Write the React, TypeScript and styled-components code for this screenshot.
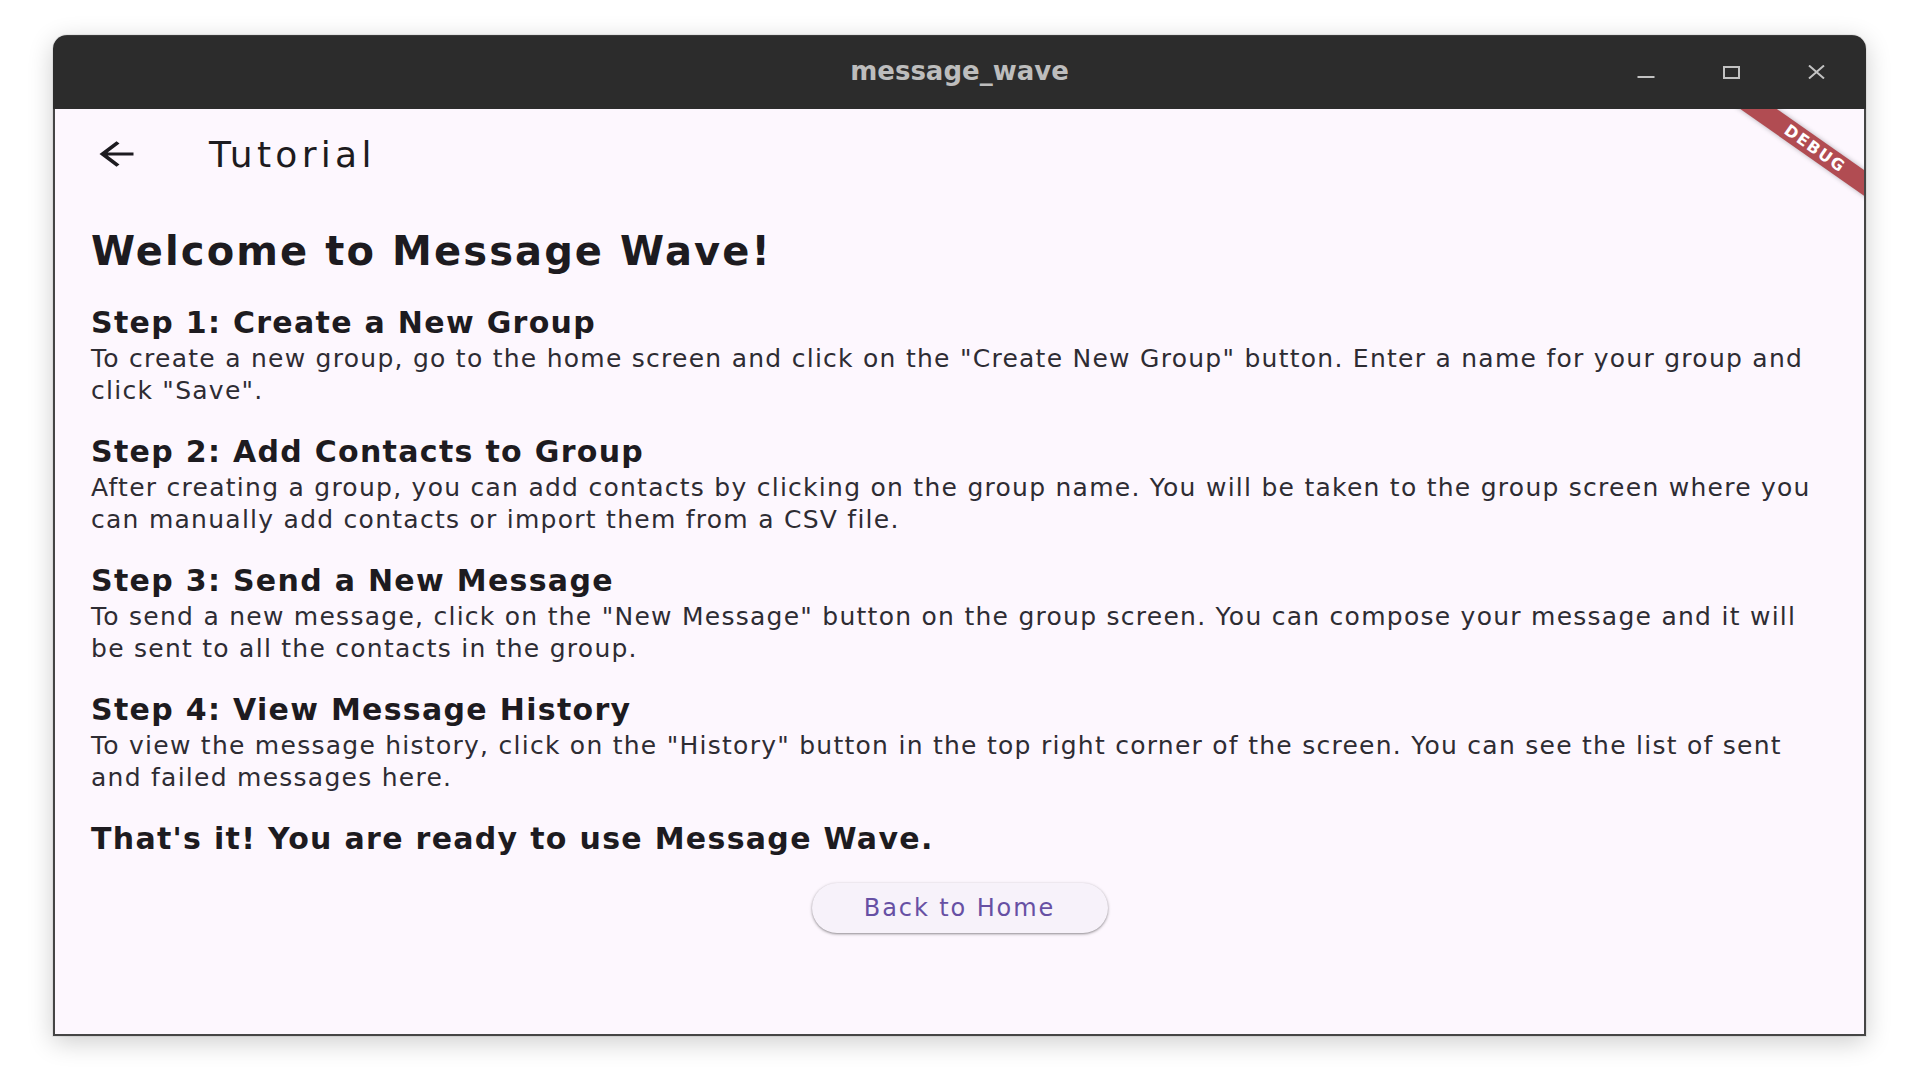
import React from "react";
import styled, { createGlobalStyle } from "styled-components";

const GlobalStyle = createGlobalStyle`
  html, body {
    margin: 0;
    padding: 0;
    background: #ffffff;
  }
  body {
    width: 1920px;
    height: 1080px;
    overflow: hidden;
    font-family: "DejaVu Sans", "Noto Sans", sans-serif;
  }
  * { box-sizing: border-box; }
`;

const Desktop = styled.div`
  width: 1920px;
  height: 1080px;
  padding: 35px 0 0 53px;
  background: #ffffff;
`;

const Window = styled.div`
  width: 1813px;
  height: 1001px;
  display: flex;
  flex-direction: column;
  border-radius: 14px 14px 0 0;
  overflow: hidden;
  box-shadow: 0 6px 26px rgba(0, 0, 0, 0.2), 0 0 0 1px rgba(0, 0, 0, 0.06);
`;

const TitleBar = styled.div`
  height: 74px;
  flex: none;
  background: #2c2c2c;
  display: grid;
  grid-template-columns: 1fr auto 1fr;
  align-items: center;
  box-shadow: inset 0 1px 0 rgba(255, 255, 255, 0.07);
`;

const WindowTitle = styled.div`
  grid-column: 2;
  font-family: "DejaVu Sans", sans-serif;
  font-weight: 700;
  font-size: 26px;
  color: #bdbdbd;
  padding-bottom: 3px;
`;

const Controls = styled.div`
  grid-column: 3;
  justify-self: end;
  display: flex;
  align-items: center;
  gap: 45px;
  margin-right: 30px;
`;

const ControlButton = styled.button`
  width: 40px;
  height: 40px;
  padding: 0;
  border: 0;
  background: transparent;
  display: flex;
  align-items: center;
  justify-content: center;
  color: #c2c2c2;
`;

const Frame = styled.div`
  flex: 1;
  position: relative;
  overflow: hidden;
  display: flex;
  flex-direction: column;
  background: #fdf7fe;
  border: 2px solid #454545;
  border-top: 0;
  color: #1d1b20;
`;

const AppBar = styled.div`
  height: 90px;
  flex: none;
  display: flex;
  align-items: center;
  padding-left: 35px;
`;

const BackButton = styled.button`
  width: 52px;
  height: 52px;
  padding: 0;
  border: 0;
  background: transparent;
  display: flex;
  align-items: center;
  justify-content: center;
  color: #1d1b20;
`;

const AppTitle = styled.h1`
  margin: 0 0 0 67px;
  font-family: "DejaVu Sans", sans-serif;
  font-weight: 400;
  font-size: 36px;
  letter-spacing: 4.3px;
  color: #1d1b20;
`;

const Body = styled.main`
  display: flex;
  flex-direction: column;
  padding: 28px 36px 0 36px;
`;

const Headline = styled.h2`
  margin: 0 0 30px;
  font-family: "DejaVu Sans", sans-serif;
  font-weight: 700;
  font-size: 40px;
  line-height: 48px;
  letter-spacing: 2.1px;
`;

const Step = styled.section`
  margin-bottom: 27px;
`;

const StepTitle = styled.h3`
  margin: 0;
  font-family: "DejaVu Sans", sans-serif;
  font-weight: 700;
  font-size: 30px;
  line-height: 36px;
  letter-spacing: 1.3px;
`;

const StepText = styled.p`
  margin: 2px 0 0;
  font-family: "DejaVu Sans", sans-serif;
  font-weight: 400;
  font-size: 25px;
  line-height: 32px;
  letter-spacing: 1.26px;
  color: #2e2c33;
`;

const ButtonRow = styled.div`
  display: flex;
  justify-content: center;
  margin-top: 26px;
`;

const HomeButton = styled.button`
  height: 50px;
  width: 296px;
  border: 0;
  border-radius: 25px;
  background: #f7f2fa;
  color: #6750a4;
  font-family: "DejaVu Sans", sans-serif;
  font-size: 24px;
  letter-spacing: 1.9px;
  box-shadow: 0 1px 2px rgba(0, 0, 0, 0.3), 0 1px 3px 1px rgba(0, 0, 0, 0.12);
`;

const DebugBanner = styled.div`
  position: absolute;
  top: 29px;
  right: -41px;
  width: 180px;
  height: 21px;
  transform: rotate(35deg);
  background: #b14c52;
  box-shadow: 0 0 5px rgba(0, 0, 0, 0.3);
  color: #ffffff;
  font-family: "DejaVu Sans", sans-serif;
  font-weight: 700;
  font-size: 16px;
  line-height: 21px;
  letter-spacing: 1.6px;
  text-align: center;
  z-index: 2;
`;

const steps = [
  {
    title: "Step 1: Create a New Group",
    text: 'To create a new group, go to the home screen and click on the "Create New Group" button. Enter a name for your group and click "Save".',
  },
  {
    title: "Step 2: Add Contacts to Group",
    text: "After creating a group, you can add contacts by clicking on the group name. You will be taken to the group screen where you can manually add contacts or import them from a CSV file.",
  },
  {
    title: "Step 3: Send a New Message",
    text: 'To send a new message, click on the "New Message" button on the group screen. You can compose your message and it will be sent to all the contacts in the group.',
  },
  {
    title: "Step 4: View Message History",
    text: 'To view the message history, click on the "History" button in the top right corner of the screen. You can see the list of sent and failed messages here.',
  },
];

const MinimizeIcon = () => (
  <svg width="18" height="13" viewBox="0 0 18 13">
    <line x1="0.5" y1="11" x2="17.5" y2="11" stroke="currentColor" strokeWidth="2" />
  </svg>
);

const MaximizeIcon = () => (
  <svg width="17" height="13" viewBox="0 0 17 13">
    <rect x="1" y="1" width="15" height="11" fill="none" stroke="currentColor" strokeWidth="2" />
  </svg>
);

const CloseIcon = () => (
  <svg width="17" height="14" viewBox="0 0 17 14">
    <path d="M1 0.5 L16 13.5 M16 0.5 L1 13.5" stroke="currentColor" strokeWidth="2" fill="none" />
  </svg>
);

const ArrowBack = () => (
  <svg width="51" height="38" viewBox="0 0 24 24" preserveAspectRatio="none">
    <path
      d="M20 11H7.83l5.59-5.59L12 4l-8 8 8 8 1.41-1.41L7.83 13H20v-2z"
      fill="currentColor"
    />
  </svg>
);

export default function App() {
  return (
    <>
      <GlobalStyle />
      <Desktop>
        <Window>
          <TitleBar>
            <WindowTitle>message_wave</WindowTitle>
            <Controls>
              <ControlButton aria-label="Minimize">
                <MinimizeIcon />
              </ControlButton>
              <ControlButton aria-label="Maximize">
                <MaximizeIcon />
              </ControlButton>
              <ControlButton aria-label="Close">
                <CloseIcon />
              </ControlButton>
            </Controls>
          </TitleBar>
          <Frame>
            <DebugBanner>DEBUG</DebugBanner>
            <AppBar>
              <BackButton aria-label="Back">
                <ArrowBack />
              </BackButton>
              <AppTitle>Tutorial</AppTitle>
            </AppBar>
            <Body>
              <Headline>Welcome to Message Wave!</Headline>
              {steps.map((s) => (
                <Step key={s.title}>
                  <StepTitle>{s.title}</StepTitle>
                  <StepText>{s.text}</StepText>
                </Step>
              ))}
              <StepTitle>That's it! You are ready to use Message Wave.</StepTitle>
              <ButtonRow>
                <HomeButton>Back to Home</HomeButton>
              </ButtonRow>
            </Body>
          </Frame>
        </Window>
      </Desktop>
    </>
  );
}
